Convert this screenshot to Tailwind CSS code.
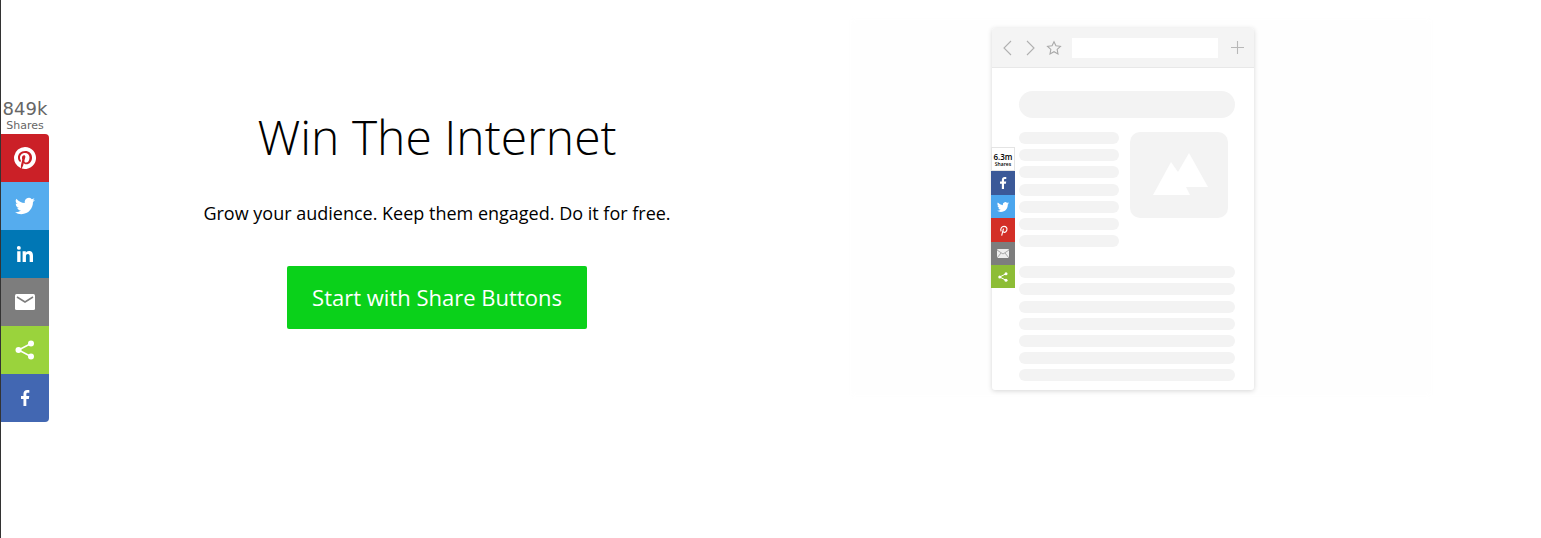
<!DOCTYPE html>
<html lang="en">
<head>
<meta charset="utf-8">
<title>Win The Internet</title>
<script src="https://cdn.jsdelivr.net/npm/@tailwindcss/browser@4"></script>
</head>
<body class="bg-white">
<div class="relative flex h-[538px] w-full overflow-hidden border-l border-[#333] font-['Open_Sans',sans-serif]">

  <!-- faint backdrop behind the illustration -->
  <div class="absolute left-[850px] top-[20px] h-[375px] w-[580px] bg-[#fefefe] blur-[2px]"></div>

  <!-- floating share bar -->
  <div class="absolute left-0 top-[100px] flex w-[48px] flex-col font-['DejaVu_Sans',sans-serif]">
    <div class="flex h-[34px] flex-col items-center text-[#666]">
      <span class="whitespace-nowrap text-[18px] leading-[17px]">849k</span>
      <span class="pt-[2px] text-[11px] leading-[14px]">Shares</span>
    </div>
    <a class="flex h-[48px] items-center justify-center rounded-tr-[4px] bg-[#cb2027]">
      <svg class="h-[22px] w-[22px]" viewBox="0 0 24 24" fill="#fff"><path d="M12 0a12 12 0 0 0-4.37 23.17c-.1-.95-.2-2.4.04-3.44l1.4-5.96s-.35-.72-.35-1.78c0-1.67.96-2.9 2.16-2.9 1.02 0 1.51.76 1.51 1.68 0 1.03-.65 2.56-.99 3.98-.28 1.19.6 2.16 1.77 2.16 2.13 0 3.76-2.24 3.76-5.48 0-2.86-2.06-4.87-5-4.87-3.4 0-5.4 2.55-5.4 5.19 0 1.03.4 2.13.9 2.73.1.12.11.22.08.34l-.33 1.36c-.05.22-.18.27-.4.16-1.5-.7-2.43-2.88-2.43-4.64 0-3.78 2.75-7.25 7.92-7.25 4.16 0 7.39 2.96 7.39 6.93 0 4.13-2.6 7.46-6.22 7.46-1.21 0-2.36-.63-2.75-1.38l-.75 2.85c-.27 1.04-1 2.35-1.49 3.15A12 12 0 1 0 12 0z"/></svg>
    </a>
    <a class="flex h-[48px] items-center justify-center bg-[#55acee]">
      <svg class="h-[20px] w-[20px]" viewBox="0 0 24 24" fill="#fff"><path d="M23.95 4.57a10 10 0 0 1-2.82.77 4.96 4.96 0 0 0 2.16-2.72 9.9 9.9 0 0 1-3.13 1.19 4.92 4.92 0 0 0-8.38 4.48A13.98 13.98 0 0 1 1.64 3.16a4.92 4.92 0 0 0 1.52 6.57 4.9 4.9 0 0 1-2.23-.61v.06a4.92 4.92 0 0 0 3.95 4.83 5 5 0 0 1-2.21.08 4.94 4.94 0 0 0 4.6 3.42A9.87 9.87 0 0 1 0 19.54a14 14 0 0 0 7.56 2.21c9.05 0 14-7.5 14-13.98 0-.21 0-.42-.02-.63a9.94 9.94 0 0 0 2.41-2.57z"/></svg>
    </a>
    <a class="flex h-[48px] items-center justify-center bg-[#0077b5]">
      <svg class="h-[16px] w-[16px]" viewBox="0 0 24 24" fill="#fff"><path d="M5.3 24H.3V8h5zM2.8 5.8A2.9 2.9 0 1 1 2.8 0a2.9 2.9 0 0 1 0 5.8zM24 24h-5v-7.8c0-1.9 0-4.300-2.600-4.300s-3 2-3 4.200V24h-5V8h4.800v2.200h.1c.7-1.300 2.300-2.600 4.700-2.600 5 0 6 3.300 6 7.600z"/></svg>
    </a>
    <a class="flex h-[48px] items-center justify-center bg-[#7d7d7d]">
      <svg class="h-[16px] w-[20px]" viewBox="0 0 20 16"><rect width="20" height="16" rx="1.500" fill="#fff"/><path d="M2 3l8 5 8-5" fill="none" stroke="#7d7d7d" stroke-width="1.500"/></svg>
    </a>
    <a class="flex h-[48px] items-center justify-center bg-[#9ad33c]">
      <svg class="h-[20px] w-[20px]" viewBox="0 0 20 20"><g fill="#fff"><circle cx="3.500" cy="10" r="3"/><circle cx="16" cy="3.500" r="3"/><circle cx="16" cy="16.500" r="3"/></g><path d="M16 3.500 3.500 10 16 16.500" fill="none" stroke="#fff" stroke-width="1.500"/></svg>
    </a>
    <a class="flex h-[48px] items-center justify-center rounded-br-[4px] bg-[#4267b2]">
      <svg class="h-[16px] w-[16px]" viewBox="0 0 24 24" fill="#fff"><path d="M14 24V13.400h3.800l.6-4.400H14V6.300c0-1.300.4-2.100 2.200-2.100h2.300V.2C18.100.1 16.800 0 15.300 0 12 0 9.700 2 9.700 5.800V9H6v4.400h3.700V24z"/></svg>
    </a>
  </div>

  <!-- left copy -->
  <div class="relative flex w-[872px] shrink-0 flex-col items-center pt-[104px]">
    <h1 class="text-[48px] font-light leading-[66px] text-black">Win The Internet</h1>
    <p class="mt-[31px] text-[18px] leading-[25px] text-black">Grow your audience. Keep them engaged. Do it for free.</p>
    <a class="mt-[40px] flex h-[63px] w-[300px] items-center justify-center rounded-[2px] bg-[#0ad11a] text-[22px] text-white">Start with Share Buttons</a>
  </div>

  <!-- right illustration -->
  <div class="relative pl-[119px] pt-[28px]">
    <div class="relative h-[362px] w-[262px] rounded-[3px] bg-white shadow-[0_1px_5px_rgba(0,0,0,0.16)]">
      <div class="flex h-[40px] items-center rounded-t-[3px] border-b border-[#e8e8e8] bg-[#f4f4f4] pl-[10px]">
        <svg class="h-[16px] w-[10px]" viewBox="0 0 10 16" fill="none" stroke="#b0b0b0" stroke-width="1.100"><path d="M9 1 2 8l7 7"/></svg>
        <svg class="ml-[14px] h-[16px] w-[10px]" viewBox="0 0 10 16" fill="none" stroke="#b0b0b0" stroke-width="1.100"><path d="m1 1 7 7-7 7"/></svg>
        <svg class="ml-[10px] h-[16px] w-[16px]" viewBox="0 0 24 24" fill="none" stroke="#a8a8a8" stroke-width="1.600"><path d="m12 2.500 2.900 6.200 6.800.8-5 4.600 1.300 6.700-6-3.300-6 3.300 1.300-6.700-5-4.600 6.800-.8z"/></svg>
        <div class="ml-[10px] h-[20px] w-[146px] bg-white"></div>
        <svg class="ml-[13px] h-[13px] w-[13px]" viewBox="0 0 13 13" stroke="#b8b8b8" stroke-width="1.100"><path d="M6.500 0v13M0 6.500h13"/></svg>
      </div>
      <div class="flex flex-col pl-[27px] pr-[19px] pt-[23px]">
        <div class="h-[27px] rounded-full bg-[#f3f3f3]"></div>
        <div class="mt-[14px] flex gap-[11px]">
          <div class="flex w-[100px] flex-col gap-[5.200px]">
            <div class="h-[12px] rounded-full bg-[#f3f3f3]"></div>
            <div class="h-[12px] rounded-full bg-[#f3f3f3]"></div>
            <div class="h-[12px] rounded-full bg-[#f3f3f3]"></div>
            <div class="h-[12px] rounded-full bg-[#f3f3f3]"></div>
            <div class="h-[12px] rounded-full bg-[#f3f3f3]"></div>
            <div class="h-[12px] rounded-full bg-[#f3f3f3]"></div>
            <div class="h-[12px] rounded-full bg-[#f3f3f3]"></div>
          </div>
          <div class="h-[86px] w-[98px] rounded-[10px] bg-[#f3f3f3]">
            <svg class="h-[86px] w-[98px]" viewBox="0 0 98 86" fill="#fff"><path d="M59 21 78 55H56l4 8H23l18-33 7 10z"/></svg>
          </div>
        </div>
        <div class="mt-[19px] flex flex-col gap-[5.200px]">
          <div class="h-[12px] rounded-full bg-[#f3f3f3]"></div>
          <div class="h-[12px] rounded-full bg-[#f3f3f3]"></div>
          <div class="h-[12px] rounded-full bg-[#f3f3f3]"></div>
          <div class="h-[12px] rounded-full bg-[#f3f3f3]"></div>
          <div class="h-[12px] rounded-full bg-[#f3f3f3]"></div>
          <div class="h-[12px] rounded-full bg-[#f3f3f3]"></div>
          <div class="h-[12px] rounded-full bg-[#f3f3f3]"></div>
        </div>
      </div>

      <!-- miniature share bar -->
      <div class="absolute -left-px top-[119px] flex w-[24px] flex-col">
        <div class="flex h-[24px] flex-col items-center justify-center border border-[#e4e4e4] bg-white font-semibold text-black">
          <span class="text-[8px] leading-[9px]">6.3m</span>
          <span class="text-[5px] leading-[6px]">Shares</span>
        </div>
        <div class="flex h-[24px] items-center justify-center bg-[#3b5998]">
          <svg class="h-[12px] w-[12px]" viewBox="0 0 24 24" fill="#fff"><path d="M14 24V13.400h3.800l.6-4.400H14V6.300c0-1.300.4-2.100 2.200-2.100h2.300V.2C18.100.1 16.800 0 15.300 0 12 0 9.700 2 9.700 5.800V9H6v4.400h3.700V24z"/></svg>
        </div>
        <div class="flex h-[23px] items-center justify-center bg-[#4ba6ee]">
          <svg class="h-[12px] w-[12px]" viewBox="0 0 24 24" fill="#fff"><path d="M23.95 4.57a10 10 0 0 1-2.82.77 4.96 4.96 0 0 0 2.16-2.72 9.900 9.900 0 0 1-3.130 1.190 4.920 4.920 0 0 0-8.380 4.480A13.980 13.980 0 0 1 1.640 3.160a4.920 4.920 0 0 0 1.520 6.570 4.900 4.900 0 0 1-2.230-.61v.06a4.920 4.920 0 0 0 3.950 4.830 5 5 0 0 1-2.210.08 4.940 4.940 0 0 0 4.600 3.420A9.870 9.870 0 0 1 0 19.540a14 14 0 0 0 7.560 2.210c9.050 0 14-7.500 14-13.980 0-.21 0-.42-.02-.63a9.940 9.940 0 0 0 2.410-2.570z"/></svg>
        </div>
        <div class="flex h-[24px] items-center justify-center bg-[#d32f27]">
          <svg class="h-[11px] w-[11px]" viewBox="0 0 24 24" fill="none" stroke="#fff" stroke-width="2.500"><path d="M7 14C4 9 8 3 13 3s8 4 6 9-7 5-8 2M12 8 8 23"/></svg>
        </div>
        <div class="flex h-[23px] items-center justify-center bg-[#7d7d7d]">
          <svg class="h-[9px] w-[12px]" viewBox="0 0 12 9"><rect width="12" height="9" rx="1" fill="#eee"/><path d="m0 1 6 4 6-4M0 9l4-5M12 9 8 4" fill="none" stroke="#8a8a8a" stroke-width=".7"/></svg>
        </div>
        <div class="flex h-[23px] items-center justify-center bg-[#8dbd36]">
          <svg class="h-[10px] w-[10px]" viewBox="0 0 20 20"><g fill="#fff"><circle cx="3.500" cy="10" r="3"/><circle cx="16" cy="3.500" r="3"/><circle cx="16" cy="16.500" r="3"/></g><path d="M16 3.500 3.500 10 16 16.500" fill="none" stroke="#fff" stroke-width="2"/></svg>
        </div>
      </div>
    </div>
  </div>
</div>
</body>
</html>
